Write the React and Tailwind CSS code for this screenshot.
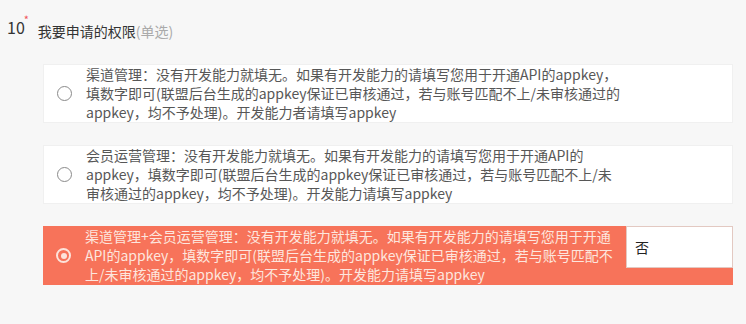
import { useState } from 'react'

const OPTIONS = [
  {
    id: 'channel',
    text: '渠道管理：没有开发能力就填无。如果有开发能力的请填写您用于开通API的appkey，填数字即可(联盟后台生成的appkey保证已审核通过，若与账号匹配不上/未审核通过的appkey，均不予处理)。开发能力者请填写appkey'
  },
  {
    id: 'member',
    text: '会员运营管理：没有开发能力就填无。如果有开发能力的请填写您用于开通API的appkey，填数字即可(联盟后台生成的appkey保证已审核通过，若与账号匹配不上/未审核通过的appkey，均不予处理)。开发能力请填写appkey'
  },
  {
    id: 'both',
    text: '渠道管理+会员运营管理：没有开发能力就填无。如果有开发能力的请填写您用于开通API的appkey，填数字即可(联盟后台生成的appkey保证已审核通过，若与账号匹配不上/未审核通过的appkey，均不予处理)。开发能力请填写appkey'
  }
]

function Radio({ checked }) {
  return checked ? (
    <span className="w-[15px] h-[15px] rounded-full border-2 border-[#fde3da] flex items-center justify-center flex-shrink-0">
      <span className="w-[6px] h-[6px] rounded-full bg-[#fde3da]" />
    </span>
  ) : (
    <span className="w-[15px] h-[15px] rounded-full border border-[#8a8a8a] bg-white flex-shrink-0" />
  )
}

export default function App() {
  const [selected, setSelected] = useState('both')
  const [appkey, setAppkey] = useState('否')

  return (
    <div
      className="w-[746px] h-[324px] bg-[#f7f7f7] overflow-hidden"
      style={{ fontFamily: '"Microsoft YaHei", "Noto Sans CJK SC", sans-serif' }}
    >
      <div className="flex items-end pt-[15px] pl-[7px] h-[42px]">
        <span className="relative text-[16px] leading-none text-[#333] mb-[7px]">
          10
          <span className="absolute -top-[5px] -right-[4px] text-[11px] text-[#f0535a]">*</span>
        </span>
        <span className="ml-[13px] text-[14px] leading-[20px] text-[#333] mb-[1px]">
          我要申请的权限<span className="text-[#aaa]">(单选)</span>
        </span>
      </div>

      <div className="flex flex-col gap-[22px] mt-[22px] ml-[43px] w-[690px]">
        {OPTIONS.map((opt) => {
          const checked = selected === opt.id
          return (
            <div
              key={opt.id}
              onClick={() => setSelected(opt.id)}
              className={`flex h-[59px] cursor-pointer ${
                checked ? 'bg-[#f7735a]' : 'bg-white border border-[#f0f0f0]'
              }`}
            >
              <div className="flex items-center pl-[13px] gap-[14px]">
                <Radio checked={checked} />
                <p
                  className={`w-[537px] text-[14px] leading-[19px] ${
                    checked ? 'text-[#fde6de]' : 'text-[#575757]'
                  }`}
                >
                  {opt.text}
                </p>
              </div>
              {checked && (
                <input
                  value={appkey}
                  onChange={(e) => setAppkey(e.target.value)}
                  onClick={(e) => e.stopPropagation()}
                  className="ml-auto self-start w-[107px] h-[42px] bg-white border border-[#e3c9c2] px-[8px] text-[14px] text-[#222] outline-none"
                />
              )}
            </div>
          )
        })}
      </div>
    </div>
  )
}
